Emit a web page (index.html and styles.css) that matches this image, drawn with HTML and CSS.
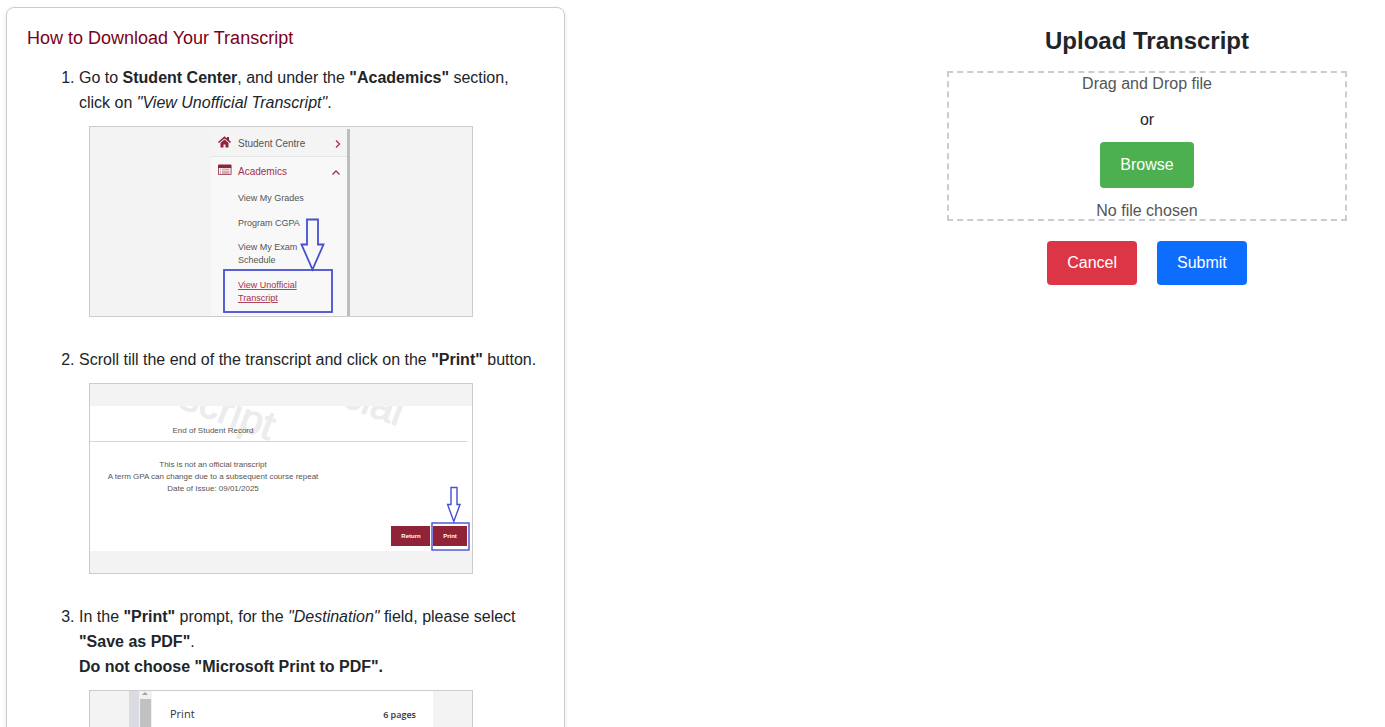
FILE: index.html
```html
<!DOCTYPE html>
<html lang="en">
<head>
<meta charset="utf-8">
<meta name="viewport" content="width=device-width, initial-scale=1">
<title>Upload Transcript</title>
<link rel="stylesheet" href="styles.css">
</head>
<body>
<main class="page">
  <section class="guide">
    <h1 class="guide-title">How to Download Your Transcript</h1>
    <ol class="steps">
      <li class="step">
        Go to <strong>Student Center</strong>, and under the <strong>"Academics"</strong> section, click on <em>"View Unofficial Transcript"</em>.
        <svg class="shot" viewBox="0 0 382 189" role="img" aria-label="Student Centre menu">
          <rect x="121" y="2" width="138" height="187" fill="#f8f8f8"/>
          <rect x="121" y="2" width="138" height="27" fill="#f4f4f4"/>
          <rect x="121" y="29" width="136" height="1" fill="#e4e4e4"/>
          <rect x="257" y="2" width="3" height="187" fill="#bdbdbd"/>
          <g fill="#912338">
            <path d="M134.500 9.200l2.500 2.200V10h2v3.100l2 1.800-1 1.200-5.500-4.700-5.500 4.700-1-1.200z"/>
            <path d="M134.500 12.500l4 3.400v4.600h-3v-3h-2v3h-3v-4.600z"/>
            <path d="M129 37.500h11.500a1 1 0 0 1 1 1v2h-13.500v-2a1 1 0 0 1 1-1z"/>
            <path fill-rule="evenodd" d="M128 40h13.500v7a1 1 0 0 1-1 1H129a1 1 0 0 1-1-1zM128.800 41v6.200h11.900V41z"/>
            <path opacity=".7" d="M130 41.800h1v.8h-1zm2 0h7.500v.8H132zM130 43.700h1v.8h-1zm2 0h7.500v.8H132zM130 45.600h1v.8h-1zm2 0h7.500v.8H132z"/>
          </g>
          <path d="M246 13.500l3.500 3.500-3.500 3.500M242.500 47.500l3.500-3.500 3.500 3.500" fill="none" stroke="#a5304a" stroke-width="1.300"/>
          <g class="menu-text">
            <text class="menu-head" x="148" y="20">Student Centre</text>
            <text class="menu-head menu-red" x="148" y="48">Academics</text>
            <text x="148" y="74">View My Grades</text>
            <text x="148" y="99">Program CGPA</text>
            <text x="148" y="123">View My Exam</text>
            <text x="148" y="136">Schedule</text>
            <text class="menu-red menu-link" x="148" y="161">View Unofficial</text>
            <text class="menu-red menu-link" x="148" y="174">Transcript</text>
          </g>
          <g fill="none" stroke="#474fcf" stroke-width="1.800">
            <path d="M217 92.500h11v25h5.500l-11 25-11-25h5.500z"/>
            <rect x="134" y="143" width="108" height="42"/>
          </g>
        </svg>
      </li>
      <li class="step">
        Scroll till the end of the transcript and click on the <strong>"Print"</strong> button.
        <svg class="shot" viewBox="0 0 382 189" role="img" aria-label="End of the transcript with the Print button">
          <defs><clipPath id="sheet"><rect y="22" width="382" height="145"/></clipPath></defs>
          <rect y="22" width="382" height="145" fill="#fff"/>
          <g class="watermark" clip-path="url(#sheet)">
            <text transform="translate(87 23) rotate(20)">script</text>
            <text transform="translate(250 21) rotate(20)">cial</text>
          </g>
          <rect y="57" width="377" height="1" fill="#d6d6d6"/>
          <g class="record-text">
            <text x="123" y="49">End of Student Record</text>
            <text x="123" y="83">This is not an official transcript</text>
            <text x="123" y="95">A term GPA can change due to a subsequent course repeat</text>
            <text x="123" y="107">Date of Issue: 09/01/2025</text>
          </g>
          <rect x="301" y="142" width="39" height="20" fill="#912338"/>
          <rect x="343" y="142" width="34" height="20" fill="#912338"/>
          <g class="record-button">
            <text x="321" y="154">Return</text>
            <text x="360" y="154">Print</text>
          </g>
          <g fill="none" stroke="#474fcf" stroke-width="1.400">
            <path d="M361 103.500h6v17h3l-6.200 17-6.200-17h3.400z"/>
            <rect x="342" y="139" width="37" height="27"/>
          </g>
        </svg>
      </li>
      <li class="step">
        In the <strong>"Print"</strong> prompt, for the <em>"Destination"</em> field, please select <strong>"Save as PDF"</strong>.<br>
        <strong>Do not choose "Microsoft Print to PDF".</strong>
        <svg class="shot" viewBox="0 0 382 189" role="img" aria-label="Print prompt">
          <rect x="39" width="10" height="189" fill="#d9dbe1"/>
          <rect x="49" width="13" height="189" fill="#f1f1f1"/>
          <rect x="50" y="8" width="11" height="181" fill="#c1c1c1"/>
          <path d="M52 4l3-3 3 3z" fill="#a3a3a3"/>
          <rect x="62" width="281" height="189" fill="#fff"/>
          <text class="print-title" x="80" y="27">Print</text>
          <text class="print-pages" x="326" y="27">6 pages</text>
        </svg>
      </li>
    </ol>
  </section>

  <form class="upload">
    <h2 class="upload-title">Upload Transcript</h2>
    <div class="dropzone">
      <p class="drop-hint">Drag and Drop file</p>
      <p class="drop-or">or</p>
      <button class="btn btn-browse" type="button">Browse</button>
      <p class="drop-status">No file chosen</p>
    </div>
    <div class="actions">
      <button class="btn btn-cancel" type="button">Cancel</button>
      <button class="btn btn-submit" type="submit">Submit</button>
    </div>
  </form>
</main>
</body>
</html>
```
FILE: styles.css
```css
* { box-sizing: border-box; }

body {
  margin: 0;
  background: #fff;
  color: #212529;
  font: 16px/25px "Liberation Sans", Arial, sans-serif;
}

h1, h2, p { margin: 0; }

.page {
  display: grid;
  grid-template-columns: minmax(0, 559px) minmax(0, 400px);
  justify-content: space-between;
  align-items: start;
  gap: 24px;
  height: 100vh;
  padding: 7px 38px 0 6px;
  overflow-y: auto;
  scrollbar-width: none;
}

.guide {
  padding: 20px;
  border: 1px solid #ccc;
  border-radius: 8px;
  box-shadow: 0 2px 5px rgba(0, 0, 0, 0.1);
}

.guide-title {
  margin-bottom: 17px;
  color: #7a0019;
  font-size: 18px;
  font-weight: 400;
  line-height: 20px;
}

.steps {
  margin: 0;
  padding-left: 52px;
}

.step { margin-bottom: 30px; }

.shot {
  display: block;
  width: calc(100% - 10px);
  max-width: 384px;
  margin: 11px 0 0 10px;
  border: 1px solid #ccc;
  background: #f3f3f3;
}

.menu-text { fill: #555; font-size: 9px; }
.menu-head { font-size: 10px; }
.menu-red { fill: #a5304a; }
.menu-link { text-decoration: underline; }

.watermark { fill: #ececec; stroke: #ececec; stroke-width: 1px; font-size: 41px; }
.record-text { fill: #555; font-size: 8px; text-anchor: middle; }
.record-button { fill: #fff; font-size: 6px; font-weight: 700; text-anchor: middle; }

.print-title { fill: #333; font: 11px "Open Sans", sans-serif; }
.print-pages { fill: #333; font: 600 9px "Open Sans", sans-serif; text-anchor: end; }

.upload {
  display: flex;
  flex-direction: column;
  padding-top: 20px;
  text-align: center;
}

.upload-title {
  margin-bottom: 16px;
  font-size: 24px;
  line-height: 28px;
}

.dropzone {
  display: flex;
  flex-direction: column;
  align-items: center;
  height: 150px;
  border: 2px dashed #ccc;
  line-height: 22px;
}

.drop-hint { margin-bottom: 14px; color: #555; }
.drop-or { margin-bottom: 11px; }
.drop-status { margin-top: 12px; color: #555; }

.actions {
  display: flex;
  justify-content: center;
  gap: 20px;
  margin-top: 20px;
}

.btn {
  padding: 10px 20px;
  border: 0;
  border-radius: 4px;
  color: #fff;
  font: inherit;
  line-height: 24px;
  cursor: pointer;
}

.btn-browse { padding: 11px 20px; background: #4caf50; }
.btn-cancel { background: #dc3545; }
.btn-submit { background: #0d6efd; }
```
